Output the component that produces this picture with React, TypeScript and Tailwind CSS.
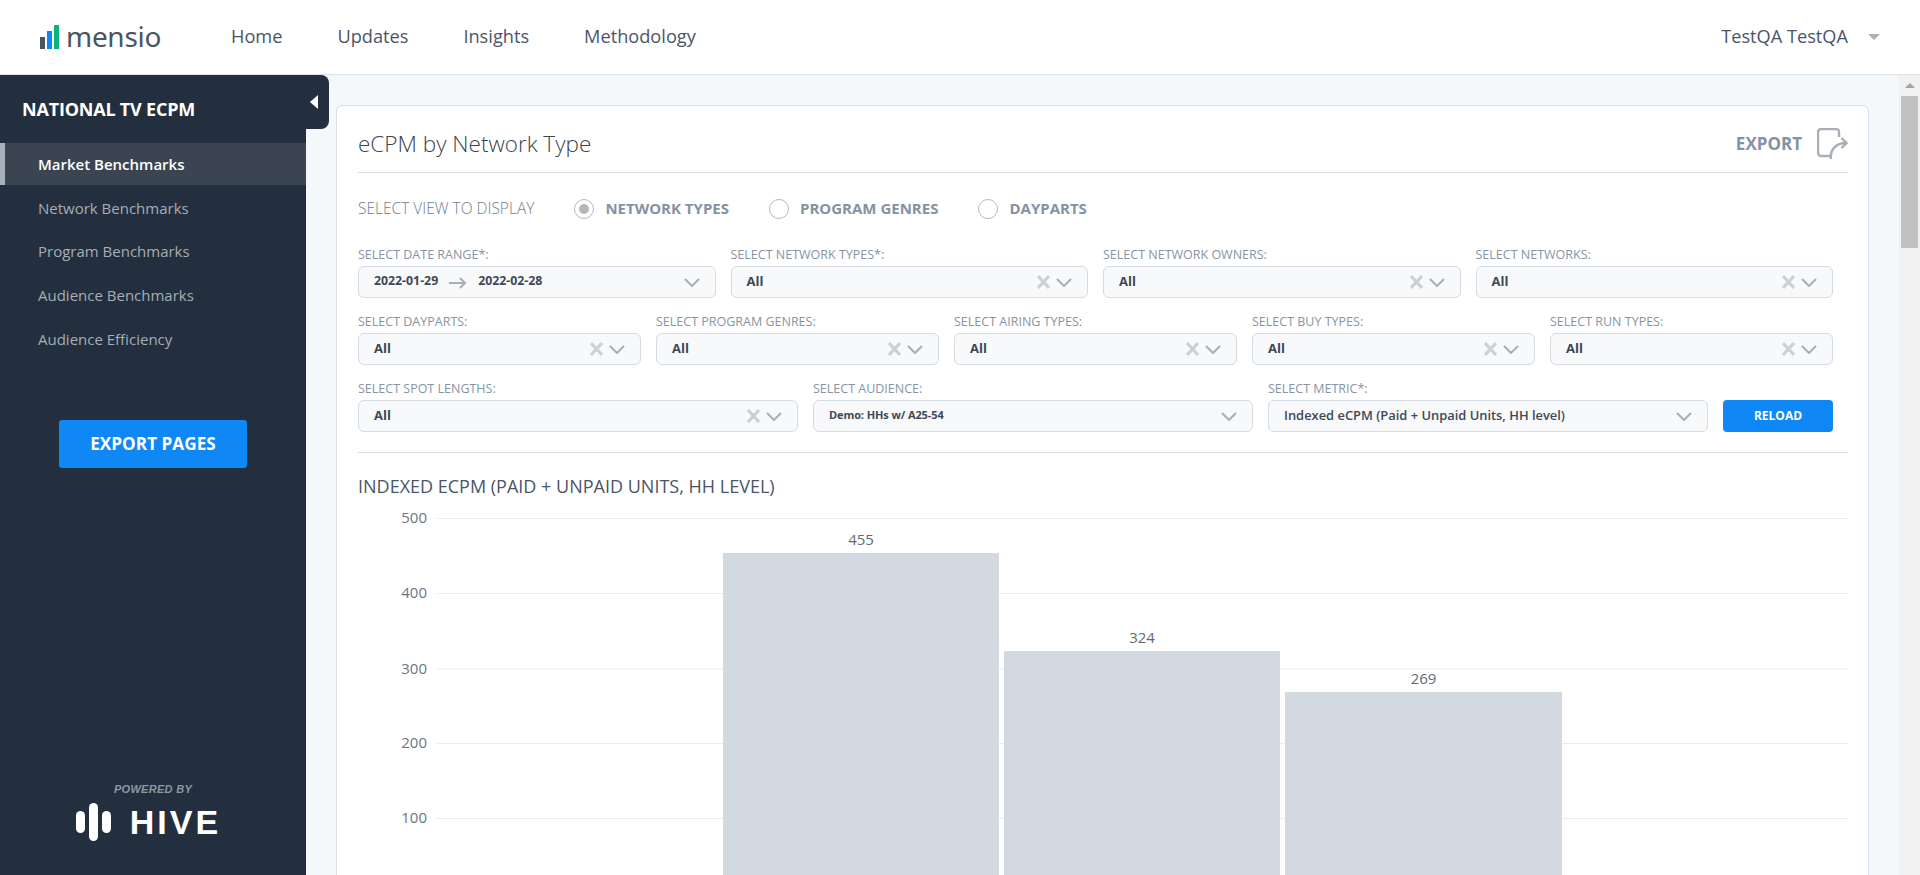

import React from "react";

const FONT = "font-['Open_Sans',sans-serif]";

function Chevron({ className = "" }: { className?: string }) {
  return (
    <svg width="16" height="9" viewBox="0 0 16 9" fill="none" className={className}>
      <path d="M1 1l7 7 7-7" stroke="#a9afb6" strokeWidth="2" />
    </svg>
  );
}

function Cross() {
  return (
    <svg width="13" height="14" viewBox="0 0 13 14" fill="none">
      <path d="M1 1l11 12M12 1L1 13" stroke="#cdcfd2" strokeWidth="3" />
    </svg>
  );
}

function FieldLabel({ children }: { children: React.ReactNode }) {
  return <div className="h-[14px] text-[12.5px] leading-[14px] text-[#8794a3] whitespace-nowrap">{children}</div>;
}

function Field({ label, value, clear = true, size = "all" }: { label: string; value: string; clear?: boolean; size?: "all" | "demo" | "metric" }) {
  const cls =
    size === "all"
      ? "text-[13px] font-bold"
      : size === "demo"
        ? "text-[11px] font-bold tracking-[-0.1px]"
        : "text-[12.9px] font-semibold";
  return (
    <div className="min-w-0">
      <FieldLabel>{label}</FieldLabel>
      <div className="mt-[4px] h-[32px] rounded-[6px] border border-[#d5dbe3] bg-[#f7f9fb] pl-[15px] pr-[15px] flex items-center">
        <span className={`flex-1 text-[#3f4855] mb-[2px] ${cls}`}>{value}</span>
        {clear && <span className="mr-[6px] flex"><Cross /></span>}
        <Chevron />
      </div>
    </div>
  );
}

function Radio({ label, checked = false }: { label: string; checked?: boolean }) {
  return (
    <div className="flex items-center gap-[11px]">
      <span className="w-[20px] h-[20px] rounded-full border border-[#b4b8bd] bg-white flex items-center justify-center">
        {checked && <span className="w-[10px] h-[10px] rounded-full bg-[#b3b7bc]" />}
      </span>
      <span className="text-[15px] font-bold text-[#8492a3]">{label}</span>
    </div>
  );
}

function Chart() {
  const ticks = [
    ["500", 12],
    ["400", 87],
    ["300", 162.5],
    ["200", 237],
    ["100", 312],
  ] as const;
  const bars = [
    { v: "455", x: 365, w: 276, y: 47 },
    { v: "324", x: 646, w: 276, y: 145 },
    { v: "269", x: 927, w: 277, y: 186 },
  ];
  return (
    <svg width="1490" height="370" viewBox="0 0 1490 370" className="block mt-[8px]">
      {ticks.map(([t, y]) => (
        <g key={t}>
          <line x1="79" x2="1490" y1={y + 0.5} y2={y + 0.5} stroke="#e8ecf0" />
          <text x="69" y={y + 5} textAnchor="end" fontSize="15" fill="#6b7683">{t}</text>
        </g>
      ))}
      {bars.map((b) => (
        <g key={b.v}>
          <rect x={b.x} y={b.y} width={b.w} height={370 - b.y} fill="#d2d9e0" />
          <text x={b.x + b.w / 2} y={b.y - 8} textAnchor="middle" fontSize="15" fill="#5f6a77">{b.v}</text>
        </g>
      ))}
    </svg>
  );
}

export default function App() {
  const items = ["Market Benchmarks", "Network Benchmarks", "Program Benchmarks", "Audience Benchmarks", "Audience Efficiency"];
  return (
    <div className={`${FONT} h-[875px] w-[1920px] overflow-hidden flex flex-col bg-white`}>
      <header className="h-[75px] shrink-0 border-b border-[#dde2e7] flex items-center bg-white">
        <div className="ml-[40px] w-[191px] flex items-end gap-[2px] h-[26px] mb-[2px]">
          <div className="flex items-end gap-[2px] mr-[5px]">
            <span className="w-[5px] h-[12px] bg-[#4a5563]" />
            <span className="w-[5px] h-[18px] bg-[#0f87f5]" />
            <span className="w-[5px] h-[24px] bg-[#0db37e]" />
          </div>
          <span className="font-['Noto_Sans',sans-serif] text-[28px] leading-[26px] text-[#4a5563] tracking-[-0.3px]">mensio</span>
        </div>
        <nav className="flex gap-[55px] text-[18.2px] text-[#4a5568]">
          <span>Home</span>
          <span>Updates</span>
          <span>Insights</span>
          <span>Methodology</span>
        </nav>
        <div className="ml-auto flex items-center text-[18.2px] text-[#4a5568] mr-[40px]">
          <span>TestQA TestQA</span>
          <span className="ml-[20px] w-0 h-0 border-x-[6px] border-x-transparent border-t-[6px] border-t-[#aab0b7]" />
        </div>
      </header>

      <div className="flex-1 min-h-0 flex relative">
        <aside className="w-[306px] shrink-0 bg-[#232f3e] flex flex-col">
          <div className="h-[68px] pl-[22px] flex items-center text-[18px] font-bold text-white tracking-[-0.2px]">NATIONAL TV ECPM</div>
          <ul className="flex flex-col gap-[1.75px]">
            {items.map((t, i) => (
              <li
                key={t}
                className={`h-[42px] flex items-center text-[15px] pl-[38px] ${
                  i === 0 ? "bg-[#3a4551] border-l-[5px] border-[#a8b0ba] !pl-[33px] font-semibold text-white" : "text-[#a6adb5]"
                }`}
              >
                {t}
              </li>
            ))}
          </ul>
          <button className="mt-[60px] ml-[59px] w-[188px] h-[48px] rounded-[3px] bg-[#0f87f5] text-white font-bold text-[17.2px]">EXPORT PAGES</button>
          <div className="mt-auto mb-[34px] flex flex-col items-center">
            <span className="font-['Liberation_Sans',sans-serif] italic font-bold text-[11px] tracking-[0.3px] text-[#8f969e]">POWERED BY</span>
            <div className="mt-[6px] mr-[9px] flex items-center">
              <svg width="36" height="38" viewBox="0 0 36 38" className="mr-[18px]">
                <rect x="0" y="8" width="9" height="22" rx="4.5" fill="#fff" />
                <rect x="13" y="0" width="9" height="38" rx="4.5" fill="#fff" />
                <rect x="26" y="8" width="9" height="22" rx="4.5" fill="#fff" />
              </svg>
              <span className="font-['Liberation_Sans',sans-serif] font-bold text-[34px] leading-[38px] tracking-[3px] text-white">HIVE</span>
            </div>
          </div>
        </aside>

        <div className="absolute left-[306px] top-0 w-[23px] h-[54px] bg-[#232f3e] rounded-r-[8px] flex items-start pt-[20px] pl-[4px]">
          <span className="w-0 h-0 border-y-[7px] border-y-transparent border-r-[8px] border-r-white" />
        </div>

        <main className="flex-1 min-w-0 overflow-hidden bg-[#f5f8fb] pl-[30px] pr-[30px] pt-[30px]">
          <section className="bg-white rounded-t-[6px] border border-[#d8dfe6] pl-[21px] pr-[20px] h-[900px]">
            <div className="h-[67px] pt-[9px] border-b border-[#d8dde3] flex items-center">
              <h1 className="text-[22.5px] font-light text-[#3b4450]">eCPM by Network Type</h1>
              <div className="ml-auto flex items-center">
                <span className="text-[17px] font-bold text-[#8492a3]">EXPORT</span>
                <svg width="31" height="32" viewBox="0 0 31 32" fill="none" className="ml-[15px]">
                  <path d="M22 9V4a3 3 0 0 0-3-3H4a3 3 0 0 0-3 3v21a3 3 0 0 0 3 3h10" stroke="#a9afb6" strokeWidth="2.4" />
                  <path d="M14 31c-1.500-9 5-16 15-16M24.500 10l5 5-5 5" stroke="#a9afb6" strokeWidth="2.4" />
                </svg>
              </div>
            </div>

            <div className="mt-[24px] flex items-center gap-[40px]">
              <span className="text-[15.5px] font-light text-[#6f7d8d]">SELECT VIEW TO DISPLAY</span>
              <div className="flex items-center gap-[40px]">
                <Radio label="NETWORK TYPES" checked />
                <Radio label="PROGRAM GENRES" />
                <Radio label="DAYPARTS" />
              </div>
            </div>

            <div className="w-[1475px] mt-[28px] flex flex-col gap-[17px]">
              <div className="grid grid-cols-4 gap-x-[15px]">
                <div className="min-w-0">
                  <FieldLabel>SELECT DATE RANGE*:</FieldLabel>
                  <div className="mt-[4px] h-[32px] rounded-[6px] border border-[#d5dbe3] bg-[#f7f9fb] pl-[15px] pr-[15px] flex items-center">
                    <span className="text-[12.3px] font-bold text-[#3f4855] mb-[2px]">2022-01-29</span>
                    <svg width="20" height="12" viewBox="0 0 20 12" fill="none" className="mx-[10px] mt-[2px]">
                      <path d="M1 6h16M12 1l5 5-5 5" stroke="#a9afb6" strokeWidth="2" />
                    </svg>
                    <span className="text-[12.3px] font-bold text-[#3f4855] mb-[2px]">2022-02-28</span>
                    <Chevron className="ml-auto" />
                  </div>
                </div>
                <Field label="SELECT NETWORK TYPES*:" value="All" />
                <Field label="SELECT NETWORK OWNERS:" value="All" />
                <Field label="SELECT NETWORKS:" value="All" />
              </div>
              <div className="grid grid-cols-5 gap-x-[15px]">
                <Field label="SELECT DAYPARTS:" value="All" />
                <Field label="SELECT PROGRAM GENRES:" value="All" />
                <Field label="SELECT AIRING TYPES:" value="All" />
                <Field label="SELECT BUY TYPES:" value="All" />
                <Field label="SELECT RUN TYPES:" value="All" />
              </div>
              <div className="grid grid-cols-[1fr_1fr_1fr_110px] gap-x-[15px] items-end">
                <Field label="SELECT SPOT LENGTHS:" value="All" />
                <Field label="SELECT AUDIENCE:" value="Demo: HHs w/ A25-54" clear={false} size="demo" />
                <Field label="SELECT METRIC*:" value="Indexed eCPM (Paid + Unpaid Units, HH level)" clear={false} size="metric" />
                <button className="h-[32px] rounded-[4px] bg-[#0f87f5] text-white text-[12px] font-bold">RELOAD</button>
              </div>
            </div>

            <div className="mt-[20px] border-b border-[#d8dde3]" />
            <h2 className="mt-[21px] text-[18px] leading-[24px] text-[#4a5568]">INDEXED ECPM (PAID + UNPAID UNITS, HH LEVEL)</h2>
            <Chart />
          </section>
        </main>

        <div className="w-[21px] shrink-0 bg-[#f1f1f1] flex flex-col items-center">
          <span className="mt-[8px] w-0 h-0 border-x-[5px] border-x-transparent border-b-[5px] border-b-[#a3a3a3]" />
          <span className="mt-[8px] w-[17px] h-[152px] bg-[#c1c1c1]" />
        </div>
      </div>
    </div>
  );
}
